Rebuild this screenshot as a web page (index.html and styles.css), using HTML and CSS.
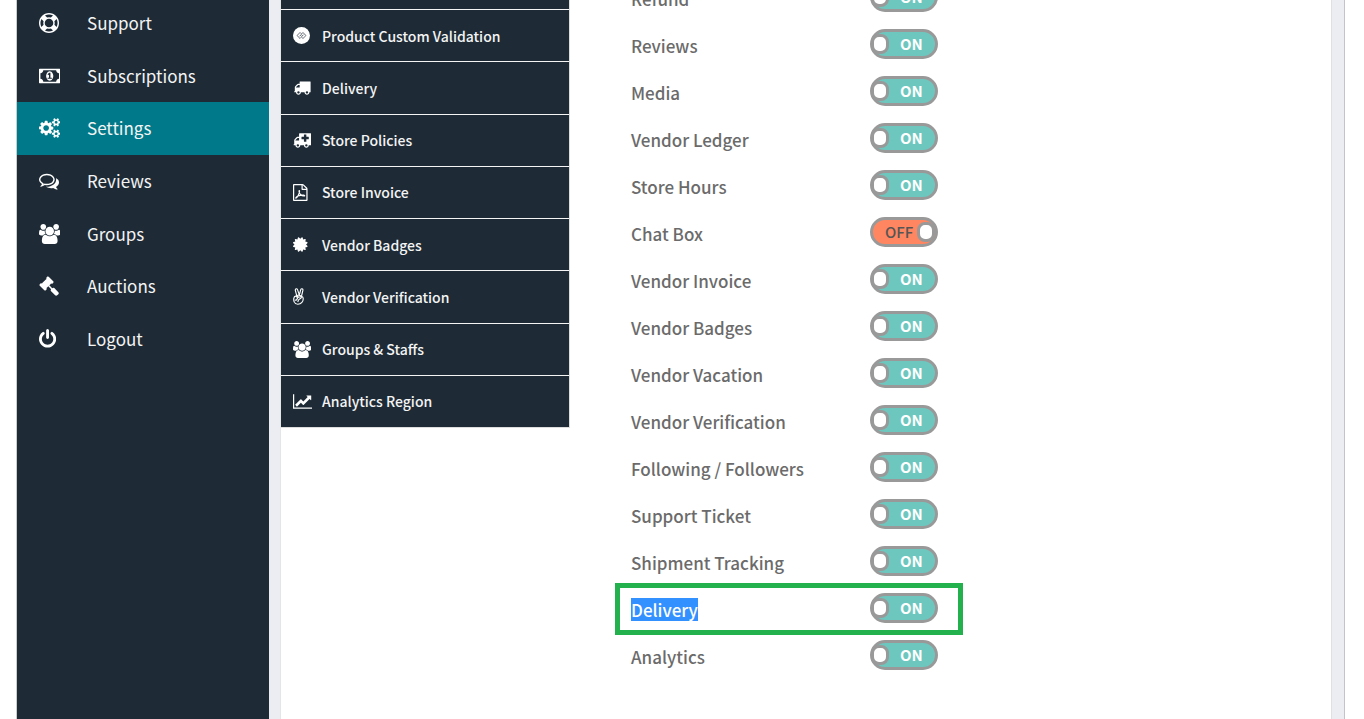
FILE: index.html
```html
<!DOCTYPE html>
<html lang="en">
<head>
    <meta charset="UTF-8">
    <meta name="viewport" content="width=device-width, initial-scale=1.0">
    <title>Settings</title>
    <link rel="stylesheet" href="styles.css">
</head>
<body>
    <!-- shared shapes -->
    <svg class="defs" aria-hidden="true">
        <symbol id="i-users" viewBox="0 0 1920 1792"><path d="M593 896q-162 5-265 128h-134q-82 0-138-40.500t-56-118.500q0-353 124-353 6 0 43.500 21t97.500 42.500 119 21.500q67 0 133-23-5 37-5 66 0 139 81 256zm1071 637q0 120-73 189.500t-194 69.500h-874q-121 0-194-69.500t-73-189.500q0-53 3.500-103.500t14-109 26.500-108.500 43-97.500 62-81 85.500-53.500 111.500-20q10 0 43 21.500t73 48 107 48 135 21.500 135-21.500 107-48 73-48 43-21.500q61 0 111.500 20t85.500 53.500 62 81 43 97.500 26.500 108.500 14 109 3.500 103.500zm-1024-1277q0 106-75 181t-181 75-181-75-75-181 75-181 181-75 181 75 75 181zm704 384q0 159-112.500 271.500t-271.500 112.500-271.500-112.500-112.500-271.500 112.500-271.500 271.500-112.500 271.500 112.500 112.500 271.500zm576 225q0 78-56 118.500t-138 40.500h-134q-103-123-265-128 81-117 81-256 0-29-5-66 66 23 133 23 59 0 119-21.500t97.500-42.500 43.500-21q124 0 124 353zm-128-609q0 106-75 181t-181 75-181-75-75-181 75-181 181-75 181 75 75 181z"/></symbol>
    </svg>

    <div class="page">
        <nav class="sidebar">
            <ul class="menu">
                <li><a href="#"><span class="icon"><svg viewBox="0 0 1792 1792"><path d="M896 0q182 0 348 71t286 191 191 286 71 348-71 348-191 286-286 191-348 71-348-71-286-191-191-286-71-348 71-348 191-286 286-191 348-71zm0 128q-190 0-361 90l194 194q82-28 167-28t167 28l194-194q-171-90-361-90zm-678 1129l194-194q-28-82-28-167t28-167l-194-194q-90 171-90 361t90 361zm678 407q190 0 361-90l-194-194q-82 28-167 28t-167-28l-194 194q171 90 361 90zm0-384q159 0 271.500-112.500t112.500-271.500-112.500-271.500-271.500-112.500-271.500 112.500-112.500 271.500 112.500 271.500 271.500 112.500zm484-217l194 194q90-171 90-361t-90-361l-194 194q28 82 28 167t-28 167z"/></svg></span>Support</a></li>
                <li><a href="#"><span class="icon"><svg viewBox="0 0 1920 1792"><path d="M768 1152h384v-96h-128v-448h-114l-148 137 77 80q42-37 55-57h2v288h-128v96zm512-256q0 70-21 142t-59.500 134-101.500 101-138 39-138-39-101.500-101-59.500-134-21-142 21-142 59.500-134 101.500-101 138-39 138 39 101.500 101 59.500 134 21 142zm512 256v-512q-106 0-181-75t-75-181h-1152q0 106-75 181t-181 75v512q106 0 181 75t75 181h1152q0-106 75-181t181-75zm128-832v1152q0 26-19 45t-45 19h-1792q-26 0-45-19t-19-45v-1152q0-26 19-45t45-19h1792q26 0 45 19t19 45z"/></svg></span>Subscriptions</a></li>
                <li class="active"><a href="#"><span class="icon"><svg viewBox="0 0 1920 1792"><path d="M896 896q0-106-75-181t-181-75-181 75-75 181 75 181 181 75 181-75 75-181zm768 512q0-52-38-90t-90-38-90 38-38 90q0 53 37.500 90.500t90.500 37.500 90.500-37.500 37.500-90.500zm0-1024q0-52-38-90t-90-38-90 38-38 90q0 53 37.500 90.500t90.500 37.500 90.500-37.500 37.500-90.500zm-384 421v185q0 10-7 19.500t-16 10.500l-155 24q-11 35-32 76 34 48 90 115 7 11 7 20 0 12-7 19-23 30-82.500 89.500t-78.500 59.500q-11 0-21-7l-115-90q-37 19-77 31-11 108-23 155-7 24-30 24h-186q-11 0-20-7.500t-10-17.500l-23-153q-34-10-75-31l-118 89q-7 7-20 7-11 0-21-8-144-133-144-160 0-9 7-19 10-14 41-53t47-61q-23-44-35-82l-152-24q-10-1-17-9.500t-7-19.500v-185q0-10 7-19.500t16-10.500l155-24q11-35 32-76-34-48-90-115-7-11-7-20 0-12 7-20 22-30 82-89t79-59q11 0 21 7l115 90q34-18 77-32 11-108 23-154 7-24 30-24h186q11 0 20 7.500t10 17.500l23 153q34 10 75 31l118-89q8-7 20-7 11 0 21 8 144 133 144 160 0 8-7 19-12 16-42 54t-45 60q23 48 34 82l152 23q10 2 17 10.500t7 19.500zm640 533v140q0 16-149 31-12 27-30 52 51 113 51 138 0 4-4 7-122 71-124 71-8 0-46-47t-52-68q-20 2-30 2t-30-2q-14 21-52 68t-46 47q-2 0-124-71-4-3-4-7 0-25 51-138-18-25-30-52-149-15-149-31v-140q0-16 149-31 13-29 30-52-51-113-51-138 0-4 4-7 4-2 35-20t59-34 30-16q8 0 46 46.500t52 67.500q20-2 30-2t30 2q51-71 92-112l6-2q4 0 124 70 4 3 4 7 0 25-51 138 17 23 30 52 149 15 149 31zm0-1024v140q0 16-149 31-12 27-30 52 51 113 51 138 0 4-4 7-122 71-124 71-8 0-46-47t-52-68q-20 2-30 2t-30-2q-14 21-52 68t-46 47q-2 0-124-71-4-3-4-7 0-25 51-138-18-25-30-52-149-15-149-31v-140q0-16 149-31 13-29 30-52-51-113-51-138 0-4 4-7 4-2 35-20t59-34 30-16q8 0 46 46.500t52 67.500q20-2 30-2t30 2q51-71 92-112l6-2q4 0 124 70 4 3 4 7 0 25-51 138 17 23 30 52 149 15 149 31z"/></svg></span>Settings</a></li>
                <li><a href="#"><span class="icon"><svg viewBox="0 0 1792 1792"><path d="M704 384q-153 0-286 52t-211.500 141-78.500 191q0 82 53 158t149 132l97 56-35 84q34-20 62-39l44-31 53 10q78 14 153 14 153 0 286-52t211.500-141 78.500-191-78.500-191-211.500-141-286-52zm0-128q191 0 353.500 68.500t256.500 186.500 94 257-94 257-256.500 186.500-353.500 68.500q-86 0-176-16-124 88-278 128-36 9-86 16h-3q-11 0-20.500-8t-11.500-21q-1-3-1-6.500t.5-6.500 2-6l2.500-5 3.500-5.500 4-5 4.500-5 4-4.500q5-6 23-25t26-29.500 22.500-29 25-38.500 20.500-44q-124-72-195-177t-71-224q0-139 94-257t256.500-186.500 353.500-68.500zm822 1169q10 24 20.500 44t25 38.500 22.500 29 26 29.500 23 25q1 1 4 4.500t4.500 5 4 5 3.500 5.500l2.500 5 2 6 .5 6.500-1 6.500q-3 14-13 22t-22 7q-50-7-86-16-154-40-278-128-90 16-176 16-271 0-472-132 58 4 88 4 161 0 309-45t264-129q125-92 192-212t67-254q0-77-23-152 129 71 204 178t75 230q0 120-71 224.500t-195 176.500z"/></svg></span>Reviews</a></li>
                <li><a href="#"><span class="icon"><svg viewBox="0 0 1920 1792"><use href="#i-users"/></svg></span>Groups</a></li>
                <li><a href="#"><span class="icon"><svg viewBox="0 0 1792 1792"><path d="M1771 1536q0 53-37 90l-107 108q-39 37-91 37-53 0-90-37l-363-364q-38-36-38-90 0-53 43-96l-256-256-126 126q-14 14-34 14t-34-14q2 2 12.500 12t12.500 13 10 11.500 10 13.500 6 13.500 5.500 16.500 1.500 18q0 38-28 68-3 3-16.500 18t-19 20.500-18.500 16.500-22 15.500-22 9-26 4.500q-40 0-68-28l-408-408q-28-28-28-68 0-13 4.500-26t9-22 15.500-22 16.500-18.500 20.500-19 18-16.500q30-28 68-28 10 0 18 1.500t16.500 5.500 13.500 6 13.500 10 11.500 10 13 12.500 12 12.500q-14-14-14-34t14-34l348-348q14-14 34-14t34 14q-2-2-12.500-12t-12.500-13-10-11.500-10-13.500-6-13.500-5.500-16.500-1.500-18q0-38 28-68 3-3 16.500-18t19-20.500 18.500-16.500 22-15.500 22-9 26-4.500q40 0 68 28l408 408q28 28 28 68 0 13-4.500 26t-9 22-15.500 22-16.500 18.500-20.500 19-18 16.500q-30 28-68 28-10 0-18-1.500t-16.500-5.500-13.500-6-13.500-10-11.500-10-13-12.500-12-12.500q14 14 14 34t-14 34l-126 126 256 256q43-43 96-43 52 0 91 37l363 363q37 39 37 91z"/></svg></span>Auctions</a></li>
                <li><a href="#"><span class="icon"><svg viewBox="128 0 1536 1792"><path d="M1664 896q0 156-61 298t-164 245-245 164-298 61-298-61-245-164-164-245-61-298q0-182 80.500-343t226.500-270q43-32 95.500-25t83.500 50q32 42 24.500 94.500t-49.500 84.500q-98 74-151.500 181t-53.500 228q0 104 40.500 198.500t109.500 163.500 163.500 109.500 198.500 40.500 198.500-40.500 163.500-109.500 109.500-163.500 40.500-198.500q0-121-53.500-228t-151.500-181q-42-32-49.500-84.500t24.500-94.500q31-43 84-50t95 25q146 109 226.500 270t80.500 343zm-640-768v640q0 52-38 90t-90 38-90-38-38-90v-640q0-52 38-90t90-38 90 38 38 90z"/></svg></span>Logout</a></li>
            </ul>
        </nav>

        <main class="content">
            <ul class="submenu">
                <li><a href="#"><span class="icon"><svg viewBox="0 0 1792 1792"><circle cx="896" cy="896" r="896"/><path class="cut" d="M860 700L740 580 424 896l316 316 190-190-150-150-120 120M932 1092l120 120 316-316-316-316-190 190 150 150 120-120"/></svg></span>Product Custom Validation</a></li>
                <li><a href="#"><span class="icon"><svg viewBox="-64 0 1856 1792"><path d="M640 1408q0-52-38-90t-90-38-90 38-38 90 38 90 90 38 90-38 38-90zm-384-512h384v-256h-158q-13 0-22 9l-195 195q-9 9-9 22v30zm1280 512q0-52-38-90t-90-38-90 38-38 90 38 90 90 38 90-38 38-90zm256-1088v1024q0 15-4 26.500t-13.500 18.500-16.500 11.500-23.500 6-22.500 2-25.500 0-22.500-.5q0 106-75 181t-181 75-181-75-75-181h-384q0 106-75 181t-181 75-181-75-75-181h-64q-3 0-22.500.5t-25.500 0-22.500-2-23.500-6-16.500-11.500-13.500-18.500-4-26.500q0-26 19-45t45-19v-320q0-8-.5-35t0-38 2.500-34.500 6.500-37 14-30.500 22.500-30l198-198q19-19 50.500-32t58.500-13h160v-192q0-26 19-45t45-19h1024q26 0 45 19t19 45z"/></svg></span>Delivery</a></li>
                <li><a href="#"><span class="icon"><svg viewBox="0 0 1920 1792"><path fill-rule="evenodd" d="M1920 64v1280q0 26-19 45t-45 19h-192q0 106-75 181t-181 75-181-75-75-181h-384q0 106-75 181t-181 75-181-75-75-181h-128q-26 0-45-19t-19-45 19-45 45-19v-416q0-26 13-58t32-51l198-198q19-19 51-32t58-13h160v-320q0-26 19-45t45-19h1152q26 0 45 19t19 45zM1664 736v-192q0-14-9-23t-23-9h-224v-224q0-14-9-23t-23-9h-192q-14 0-23 9t-9 23v224h-224q-14 0-23 9t-9 23v192q0 14 9 23t23 9h224v224q0 14 9 23t23 9h192q14 0 23-9t9-23v-224h224q14 0 23-9t9-23zM256 896h384v-256h-158q-14 2-22 9l-195 195q-7 12-9 22zM640 1408a128 128 0 1 0-256 0 128 128 0 0 0 256 0zM1536 1408a128 128 0 1 0-256 0 128 128 0 0 0 256 0z"/></svg></span>Store Policies</a></li>
                <li><a href="#"><span class="icon"><svg viewBox="128 0 1536 1792"><path d="M1596 380q28 28 48 76t20 88v1152q0 40-28 68t-68 28h-1344q-40 0-68-28t-28-68v-1600q0-40 28-68t68-28h896q40 0 88 20t76 48zm-444-244v376h376q-10-29-22-41l-313-313q-12-12-41-22zm384 1528v-1024h-416q-40 0-68-28t-28-68v-416h-768v1536h1280z"/><path class="line" d="M430 1490q100-20 250-290 130-250 140-430 0-90-30-90t-30 80q20 200 160 350 160 150 340 160 110 0 110-40t-120-60q-280-20-590 90-200 80-230 190z"/></svg></span>Store Invoice</a></li>
                <li><a href="#"><span class="icon"><svg viewBox="128 0 1536 1792"><path d="M1504 896l138 135q30 28 20 70-12 41-52 51l-188 48 53 186q12 41-19 70-29 31-70 19l-186-53-48 188q-10 40-51 52-12 2-19 2-31 0-51-22l-135-138-135 138q-28 30-70 20-41-11-51-52l-48-188-186 53q-41 12-70-19-31-29-19-70l53-186-188-48q-40-10-52-51-10-42 20-70l138-135-138-135q-30-28-20-70 12-41 52-51l188-48-53-186q-12-41 19-70 29-31 70-19l186 53 48-188q10-41 51-51 41-12 70 19l135 139 135-139q29-30 70-19 41 10 51 51l48 188 186-53q41-12 70 19 31 29 19 70l-53 186 188 48q40 10 52 51 10 42-20 70z"/></svg></span>Vendor Badges</a></li>
                <li><a href="#"><span class="icon"><svg viewBox="0 0 1400 1792"><path class="line" d="M400 830L245 245q-20-130 80-165 110-20 150 90l190 560 150-560q40-110 140-90 110 30 90 150l-150 640q190 60 180 250 10 280-170 430-130 160-400 160-270 0-370-220-80-200-50-400 40-210 190-230 90-10 130 70l70 160M400 830l130-80 120 0 240 110M475 1090l-110 160q-50 70-120 20M600 980q150-90 250-30 60 60-30 130l-180 120q-90 90-120 230M400 830l200 150"/></svg></span>Vendor Verification</a></li>
                <li><a href="#"><span class="icon"><svg viewBox="0 0 1920 1792"><use href="#i-users"/></svg></span>Groups &amp; Staffs</a></li>
                <li><a href="#"><span class="icon"><svg viewBox="0 0 2048 1792"><path d="M2048 1536v128h-2048v-1536h128v1408h1920zm-128-1248v435q0 21-19.500 29.500t-35.500-7.500l-121-121-633 633q-10 10-23 10t-23-10l-233-233-416 416-192-192 585-585q10-10 23-10t23 10l233 233 464-464-121-121q-16-16-7.500-35.500t29.500-19.500h435q14 0 23 9t9 23z"/></svg></span>Analytics Region</a></li>
            </ul>

            <form class="options">
                <div class="option"><label for="refund">Refund</label><span class="switch on"><input type="checkbox" id="refund" checked><span>ON</span></span></div>
                <div class="option"><label for="reviews">Reviews</label><span class="switch on"><input type="checkbox" id="reviews" checked><span>ON</span></span></div>
                <div class="option"><label for="media">Media</label><span class="switch on"><input type="checkbox" id="media" checked><span>ON</span></span></div>
                <div class="option"><label for="ledger">Vendor Ledger</label><span class="switch on"><input type="checkbox" id="ledger" checked><span>ON</span></span></div>
                <div class="option"><label for="hours">Store Hours</label><span class="switch on"><input type="checkbox" id="hours" checked><span>ON</span></span></div>
                <div class="option"><label for="chat">Chat Box</label><span class="switch off"><input type="checkbox" id="chat"><span>OFF</span></span></div>
                <div class="option"><label for="invoice">Vendor Invoice</label><span class="switch on"><input type="checkbox" id="invoice" checked><span>ON</span></span></div>
                <div class="option"><label for="badges">Vendor Badges</label><span class="switch on"><input type="checkbox" id="badges" checked><span>ON</span></span></div>
                <div class="option"><label for="vacation">Vendor Vacation</label><span class="switch on"><input type="checkbox" id="vacation" checked><span>ON</span></span></div>
                <div class="option"><label for="verification">Vendor Verification</label><span class="switch on"><input type="checkbox" id="verification" checked><span>ON</span></span></div>
                <div class="option"><label for="followers">Following / Followers</label><span class="switch on"><input type="checkbox" id="followers" checked><span>ON</span></span></div>
                <div class="option"><label for="ticket">Support Ticket</label><span class="switch on"><input type="checkbox" id="ticket" checked><span>ON</span></span></div>
                <div class="option"><label for="tracking">Shipment Tracking</label><span class="switch on"><input type="checkbox" id="tracking" checked><span>ON</span></span></div>
                <div class="option marked"><label for="delivery"><mark>Delivery</mark></label><span class="switch on"><input type="checkbox" id="delivery" checked><span>ON</span></span></div>
                <div class="option"><label for="analytics">Analytics</label><span class="switch on"><input type="checkbox" id="analytics" checked><span>ON</span></span></div>
            </form>
        </main>
    </div>
</body>
</html>
```
FILE: styles.css
```css
*, *::before, *::after {
    box-sizing: border-box;
}
body {
    margin: 0;
    height: 100vh;
    overflow: hidden;
    background: #fff;
    font-family: "Source Sans Pro", "Noto Sans CJK SC", sans-serif;
    font-weight: 500;
}
ul {
    margin: 0;
    padding: 0;
    list-style: none;
}
a {
    color: #f4f4f4;
    text-decoration: none;
}
svg {
    display: block;
    fill: #fff;
}
.defs {
    position: absolute;
    width: 0;
    height: 0;
}
.page {
    display: flex;
    height: 100vh;
    margin: 0 19px 0 16px;
    padding-right: 12px;
    background: #ecedf2;
    border-left: 1px solid #ccc;
    border-right: 1px solid #c4c4c8;
}

/* left menu */
.sidebar {
    flex: 0 0 252px;
    margin-right: 11px;
    background: #1e2b36;
}
.menu {
    display: flex;
    flex-direction: column;
    height: 368px;
    margin-top: -3px;
}
.menu li {
    flex: 1;
}
.menu .active {
    background: #007a8a;
}
.menu a {
    display: flex;
    align-items: center;
    height: 100%;
    padding-left: 22px;
    font-size: 17px;
    font-weight: 400;
    line-height: 24px;
}
.menu .icon {
    width: 48px;
}
.menu svg {
    height: 20px;
}

/* settings tabs */
.content {
    flex: 1;
    display: flex;
    align-items: flex-start;
    background: #fff;
    border-left: 1px solid #e4e5e7;
    border-right: 1px solid #e0e0e0;
}
.submenu {
    flex: 0 0 289px;
    display: flex;
    flex-direction: column;
    height: 428px;
    padding-top: 9px;
    background: #1e2b36;
    border-right: 1px solid #ddd;
    border-bottom: 1px solid #ddd;
}
.submenu li {
    flex: 1;
    border-top: 1px solid #f4f4f4;
}
.submenu a {
    display: flex;
    align-items: center;
    height: 100%;
    padding-left: 12px;
    font-size: 14px;
    line-height: 20px;
}
.submenu .icon {
    width: 29px;
}
.submenu svg {
    height: 17px;
}
.cut {
    fill: none;
    stroke: #1e2b36;
    stroke-width: 70;
}
.line {
    fill: none;
    stroke: #fff;
    stroke-width: 120;
    stroke-linejoin: round;
    stroke-linecap: round;
}

/* switches */
.options {
    flex: 1;
    margin-top: -27px;
    padding-left: 61px;
}
.option {
    position: relative;
    display: flex;
    align-items: center;
    height: 47px;
}
.option label {
    width: 239px;
    padding-top: 4px;
    color: #6b6b6b;
    font-size: 17px;
    line-height: 23px;
}
.switch {
    position: relative;
    width: 68px;
    height: 30px;
    border: 3px solid #999;
    border-radius: 15px;
    font-size: 15px;
    font-weight: 700;
    line-height: 24px;
}
.switch input {
    position: absolute;
    inset: 0;
    width: 100%;
    height: 100%;
    margin: 0;
    opacity: 0;
}
.switch::after {
    content: "";
    position: absolute;
    top: 2px;
    width: 18px;
    height: 20px;
    background: #fff;
    border: 3px solid #999;
    border-radius: 8px;
}
.on {
    padding-left: 27px;
    background: #6dc7be;
    color: #fff;
}
.on::after {
    left: -2px;
}
.off {
    padding-left: 12px;
    background: #ff8661;
    color: #555;
    font-weight: 500;
}
.off::after {
    right: 0;
}
mark {
    display: inline-block;
    background: #3390ff;
    color: #fff;
}
.marked::before {
    content: "";
    position: absolute;
    top: -1px;
    left: -16px;
    width: 348px;
    height: 52px;
    border: 5px solid #22b14c;
}
```
